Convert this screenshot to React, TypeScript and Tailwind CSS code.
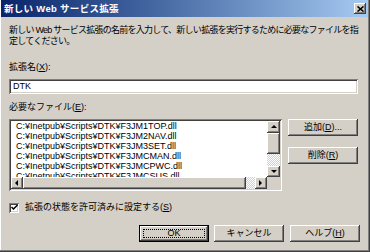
const raised =
  "shadow-[inset_-1px_-1px_#404040,inset_1px_1px_#ffffff,inset_-2px_-2px_#808080,inset_2px_2px_#d4d0c8]";
const sunken =
  "shadow-[inset_1px_1px_#808080,inset_-1px_-1px_#ffffff,inset_2px_2px_#404040,inset_-2px_-2px_#d4d0c8]";
const track =
  "bg-[repeating-conic-gradient(#ffffff_0%_25%,#d4d0c8_0%_50%)] bg-[length:2px_2px]";

const files = [
  "C:¥Inetpub¥Scripts¥DTK¥F3JM1TOP.dll",
  "C:¥Inetpub¥Scripts¥DTK¥F3JM2NAV.dll",
  "C:¥Inetpub¥Scripts¥DTK¥F3JM3SET.dll",
  "C:¥Inetpub¥Scripts¥DTK¥F3JMCMAN.dll",
  "C:¥Inetpub¥Scripts¥DTK¥F3JMCPWC.dll",
  "C:¥Inetpub¥Scripts¥DTK¥F3JMCSUS.dll",
];

function Arrow({ dir }: { dir: "up" | "down" | "left" | "right" }) {
  const pts = {
    up: "1,5 4,2 7,5",
    down: "1,2 4,5 7,2",
    left: "5,1 2,4 5,7",
    right: "2,1 5,4 2,7",
  }[dir];
  return (
    <svg width="8" height="8" viewBox="0 0 8 8">
      <polygon points={pts} fill="#000" />
    </svg>
  );
}

function Btn({
  children,
  className = "",
  isDefault = false,
}: {
  children: React.ReactNode;
  className?: string;
  isDefault?: boolean;
}) {
  if (isDefault) {
    return (
      <div className={`h-[17px] w-[70px] border border-black ${className}`}>
        <div className={`h-full w-full ${raised} flex items-center justify-center p-[3px]`}>
          <div className="h-full w-full border border-dotted border-black flex items-center justify-center leading-none">
            {children}
          </div>
        </div>
      </div>
    );
  }
  return (
    <div
      className={`h-[17px] w-[70px] ${raised} flex items-center justify-center leading-none ${className}`}
    >
      {children}
    </div>
  );
}

const U = ({ c }: { c: string }) => <span className="underline">{c}</span>;

export default function App() {
  return (
    <div className="w-[370px] h-[252px] bg-[#d4d0c8] text-black text-[9px] font-['Liberation_Sans','Noto_Sans_CJK_JP',sans-serif] shadow-[inset_-1px_-1px_#404040,inset_-2px_-2px_#808080,inset_1px_0_#ffffff] overflow-hidden">
      {/* Title bar */}
      <div className="h-[17px] mr-[2px] ml-[1px] bg-linear-to-r from-[#0a246a] to-[#a6caf0] flex items-center justify-between pl-[3px] pr-[2px]">
        <span className="text-white font-bold text-[9.5px] leading-none whitespace-nowrap tracking-[0.3px]">
          新しい Web サービス拡張
        </span>
        <div className={`w-[12px] h-[11px] bg-[#d4d0c8] ${raised} flex items-center justify-center`}>
          <svg width="7" height="6" viewBox="0 0 7 6">
            <path d="M0.5 0.5 L6.5 5.5 M6.5 0.5 L0.5 5.5" stroke="#000" strokeWidth="1.6" />
          </svg>
        </div>
      </div>

      {/* Body */}
      <div className="flex flex-col pl-[9px] pr-[10px]">
        <p className="mt-[8px] leading-[11px] whitespace-nowrap tracking-[-0.75px]">
          新しい Web サービス拡張の名前を入力して、新しい拡張を実行するために必要なファイルを指
          <br />
          定してください。
        </p>

        <div className="mt-[15px] leading-[11px]">
          拡張名(<U c="X" />):
        </div>
        <div className={`mt-[6px] h-[15px] w-[349px] bg-white ${sunken} flex items-center pl-[4px] leading-none`}>
          DTK
        </div>

        <div className="mt-[8px] leading-[11px]">
          必要なファイル(<U c="E" />):
        </div>

        <div className="mt-[6px] flex gap-[6px]">
          {/* List box */}
          <div className={`w-[273px] h-[72px] bg-white ${sunken} p-[2px]`}>
            <div className="grid grid-cols-[256px_13px] grid-rows-[56px_12px] h-full">
              <div className="overflow-hidden pl-[5px]">
                {files.map((f) => (
                  <div key={f} className="h-[10px] leading-[10px] whitespace-nowrap">
                    {f}
                  </div>
                ))}
              </div>
              <div className="flex flex-col bg-[#d4d0c8]">
                <div className={`h-[12px] ${raised} bg-[#d4d0c8] flex items-center justify-center`}>
                  <Arrow dir="up" />
                </div>
                <div className={`h-[21px] ${raised} bg-[#d4d0c8]`} />
                <div className={`flex-1 ${track}`} />
                <div className={`h-[11px] ${raised} bg-[#d4d0c8] flex items-center justify-center`}>
                  <Arrow dir="down" />
                </div>
              </div>
              <div className="flex bg-[#d4d0c8]">
                <div className={`w-[12px] ${raised} bg-[#d4d0c8] flex items-center justify-center`}>
                  <Arrow dir="left" />
                </div>
                <div className={`w-[223px] ${raised} bg-[#d4d0c8]`} />
                <div className={`flex-1 ${track}`} />
                <div className={`w-[12px] ${raised} bg-[#d4d0c8] flex items-center justify-center`}>
                  <Arrow dir="right" />
                </div>
              </div>
              <div className="bg-[#d4d0c8]" />
            </div>
          </div>

          {/* Side buttons */}
          <div className="flex flex-col gap-[11px]">
            <Btn>
              追加(<U c="D" />)...
            </Btn>
            <Btn>
              削除(<U c="R" />)
            </Btn>
          </div>
        </div>

        {/* Checkbox */}
        <div className="mt-[11px] h-[11px] flex items-center gap-[6px]">
          <div className={`w-[10px] h-[10px] bg-white ${sunken} flex items-center justify-center`}>
            <svg width="7" height="7" viewBox="0 0 7 7">
              <path d="M0.5 3 L2.5 5 L6.5 1" stroke="#000" strokeWidth="1.5" fill="none" />
            </svg>
          </div>
          <span className="leading-[11px] whitespace-nowrap">
            拡張の状態を許可済みに設定する(<U c="S" />)
          </span>
        </div>

        {/* Bottom buttons */}
        <div className="mt-[12px] flex justify-end">
          <Btn isDefault>OK</Btn>
          <Btn className="ml-[5px]">キャンセル</Btn>
          <Btn className="ml-[6px]">
            ヘルプ(<U c="H" />)
          </Btn>
        </div>
      </div>
    </div>
  );
}
